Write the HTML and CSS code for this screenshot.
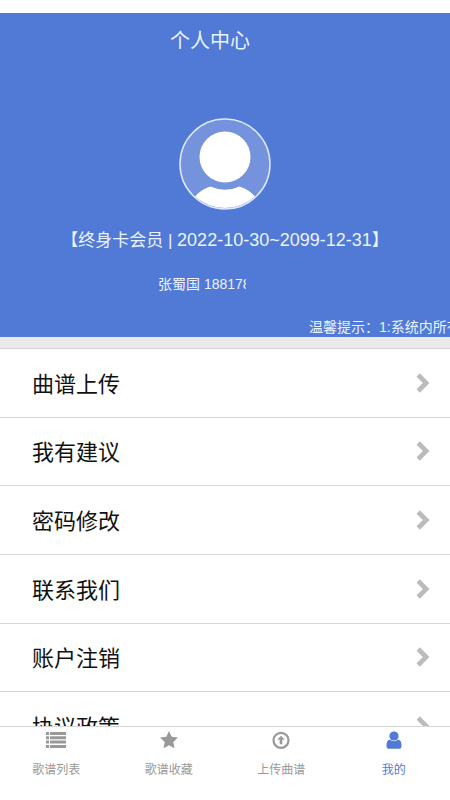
FILE: index.html
```
<!DOCTYPE html>
<html lang="zh-CN">
<head>
<meta charset="utf-8">
<meta name="viewport" content="width=device-width, initial-scale=1">
<title>个人中心</title>
<link rel="stylesheet" href="styles.css">
</head>
<body>
<svg class="sprite" aria-hidden="true">
  <symbol id="chevron" viewBox="0 0 14 20"><path d="M2.200 2 10.200 10l-8 8" fill="none" stroke="currentColor" stroke-width="4.600"/></symbol>
</svg>
<div class="app">
  <main class="content">
    <header class="profile">
      <h1 class="title">个人中心</h1>
      <svg class="avatar" viewBox="0 0 92 92" role="img" aria-label="头像">
        <circle cx="46" cy="46" r="45" fill="#7593dc"/>
        <circle cx="46" cy="39" r="25.500" fill="#fff"/>
        <path d="M16 78.500C20 74 25 70.500 31.500 68.500Q46 75 60.500 68.500C67 70.500 72 74 76 78.500A45 45 0 0 1 16 78.500Z" fill="#fff"/>
        <circle cx="46" cy="46" r="45" fill="none" stroke="#dce9fa" stroke-width="1.500"/>
      </svg>
      <p class="member">【终身卡会员 | <span class="dates">2022-10-30~2099-12-31</span>】</p>
      <p class="account">张蜀国 188178</p>
      <p class="notice">温馨提示：1:系统内所有</p>
    </header>
    <nav class="menu">
      <a class="row" href="#">曲谱上传<svg class="arrow"><use href="#chevron"/></svg></a>
      <a class="row" href="#">我有建议<svg class="arrow"><use href="#chevron"/></svg></a>
      <a class="row" href="#">密码修改<svg class="arrow"><use href="#chevron"/></svg></a>
      <a class="row" href="#">联系我们<svg class="arrow"><use href="#chevron"/></svg></a>
      <a class="row" href="#">账户注销<svg class="arrow"><use href="#chevron"/></svg></a>
      <a class="row" href="#">协议政策<svg class="arrow"><use href="#chevron"/></svg></a>
    </nav>
  </main>
  <nav class="tabs">
    <a class="tab" href="#">
      <svg class="icon" viewBox="0 0 20 20"><path d="M0 2h3v3H0zM4 2h16v3H4zM0 6.300h3v3H0zM4 6.300h16v3H4zM0 10.600h3v3H0zM4 10.600h16v3H4zM0 15h3v3H0zM4 15h16v3H4z"/></svg>
      歌谱列表
    </a>
    <a class="tab" href="#">
      <svg class="icon" viewBox="0 0 20 20"><path d="M10 1l2.700 5.800 6.300.8-4.700 4.300 1.200 6.300L10 15.200l-5.500 3 1.200-6.300L1 7.600l6.300-.8z"/></svg>
      歌谱收藏
    </a>
    <a class="tab" href="#">
      <svg class="icon" viewBox="0 0 20 20"><circle cx="10" cy="10.300" r="7.500" fill="none" stroke="currentColor" stroke-width="2.200"/><path d="M10 5.800l3.700 4h-2.400v4.500H8.700V9.800H6.300z"/></svg>
      上传曲谱
    </a>
    <a class="tab active" href="#" aria-current="page">
      <svg class="icon" viewBox="0 0 20 20"><circle cx="10" cy="6" r="4.600"/><path d="M6 9.500C3.500 10 2.500 12 2.500 15v1.500Q2.500 18.700 4.700 18.700h10.600Q17.500 18.700 17.500 16.500V15c0-3-1-5-3.500-5.500a5.300 5.300 0 0 1-8 0z"/></svg>
      我的
    </a>
  </nav>
</div>
</body>
</html>
```

FILE: styles.css
```
* {
  box-sizing: border-box;
}

body {
  margin: 0;
  background: #fff;
  color: #111;
  font-family: "Liberation Sans", "Noto Sans CJK SC", sans-serif;
}

a {
  color: inherit;
  text-decoration: none;
}

.sprite {
  position: absolute;
  width: 0;
  height: 0;
}

.app {
  display: flex;
  flex-direction: column;
  height: 100vh;
  padding-top: 13px;
}

.content {
  flex: 1;
  min-height: 0;
  overflow: hidden;
}

.profile {
  display: flex;
  flex-direction: column;
  align-items: center;
  background: #507ad6;
  color: #eaf3ff;
  overflow: hidden;
}

.title {
  margin: 13px 30px 0 0;
  font-size: 20px;
  line-height: 30px;
  font-weight: 400;
}

.avatar {
  width: 92px;
  height: 92px;
  margin-top: 62px;
}

.member {
  margin: 17px 0 0;
  font-size: 17px;
  line-height: 26px;
  white-space: nowrap;
}

.dates {
  font-size: 18px;
}

.account {
  width: 88px;
  margin: 20px 46px 0 0;
  font-size: 14px;
  line-height: 20px;
  white-space: nowrap;
  overflow: hidden;
}

.notice {
  align-self: stretch;
  margin: 23px 0 0;
  padding-left: 309px;
  font-size: 14px;
  line-height: 20px;
  white-space: nowrap;
  overflow: hidden;
}

.menu {
  display: grid;
  grid-auto-rows: 1fr;
  min-height: 423px;
  border-top: 11px solid #eaeaea;
}

.row {
  display: flex;
  align-items: center;
  justify-content: space-between;
  padding: 0 20px 2px 32px;
  border-top: 1px solid #d6d6d6;
  font-size: 22px;
}

.arrow {
  width: 14px;
  height: 20px;
  margin-top: 2px;
  color: #bbb;
}

.tabs {
  display: grid;
  grid-template-columns: repeat(4, 1fr);
  height: 74px;
  border-top: 1px solid #d6d6d6;
}

.tab {
  display: flex;
  flex-direction: column;
  align-items: center;
  gap: 11px;
  padding-top: 3px;
  color: #999;
  font-size: 12px;
  line-height: 18px;
}

.active {
  color: #507ad6;
}

.icon {
  width: 20px;
  height: 20px;
  fill: currentColor;
}
```
